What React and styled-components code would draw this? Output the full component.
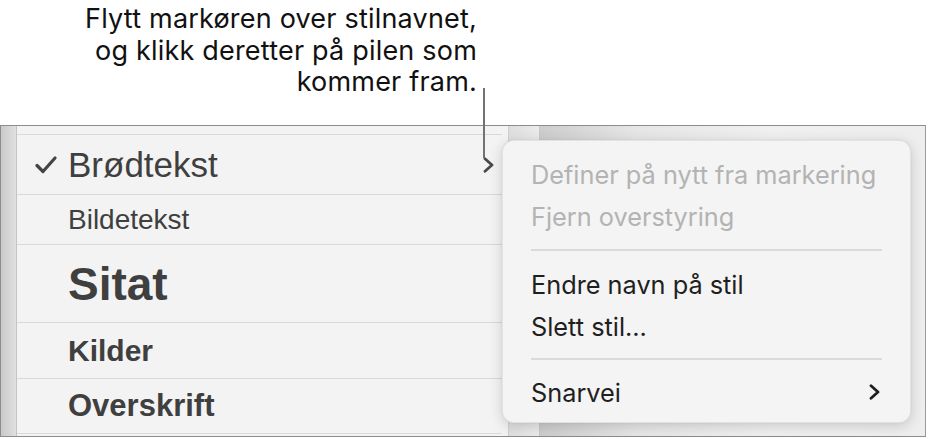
import styled, { createGlobalStyle } from "styled-components";

const GlobalStyle = createGlobalStyle`
  html, body {
    margin: 0;
    padding: 0;
    background: #ffffff;
  }
  body {
    font-family: Inter, "Liberation Sans", sans-serif;
  }
`;

const Page = styled.div`
  position: relative;
  width: 928px;
  height: 439px;
  overflow: hidden;
  background: #ffffff;
`;

const Callout = styled.div`
  height: 125px;
  box-sizing: border-box;
  padding-top: 3px;
  width: 477px;
  text-align: right;
  font-family: Inter, sans-serif;
  font-size: 27px;
  letter-spacing: 0.2px;
  line-height: 31.5px;
  color: #111111;
`;

const CalloutLine = styled.div`
  white-space: nowrap;
`;

// leader line from the callout down to the row's arrow
const Pointer = styled.div`
  position: absolute;
  left: 483px;
  top: 88px;
  width: 2px;
  height: 70px;
  background: #727272;
  z-index: 3;
`;

const Frame = styled.div`
  display: flex;
  height: 312px;
  width: 926px;
  border: 1px solid #8c8c8c;
  border-right-color: #9a9a9a;
  box-sizing: border-box;
  background: #f2f2f2;
`;

const SideStrip = styled.div`
  width: 15px;
  flex: none;
  background: linear-gradient(to right, #c9c9c9, #e0e0e0);
  border-right: 1px solid #c4c4c4;
`;

const List = styled.div`
  width: 491px;
  flex: none;
  display: flex;
  flex-direction: column;
  background: #f3f3f3;
  border-right: 1px solid #cfcfcf;
`;

const Row = styled.div`
  height: ${(p) => p.$h}px;
  flex: none;
  display: flex;
  align-items: center;
  padding-left: ${(p) => (p.$checked ? 17 : 51)}px;
  padding-right: 8px;
  margin-right: 6px;
  border-bottom: 1px solid #d9d9d9;
  font-family: "Liberation Sans", Arial, sans-serif;
  color: #3f3f3f;
  font-size: ${(p) => p.$size}px;
  font-weight: ${(p) => (p.$bold ? 700 : 400)};
`;

const Check = styled.svg`
  width: 24px;
  height: 20px;
  margin-right: 10px;
  flex: none;
`;

const Label = styled.span`
  flex: 1;
`;

const Chevron = styled.svg`
  width: 11px;
  height: 16px;
  flex: none;
`;

const MidStrip = styled.div`
  width: 30px;
  flex: none;
  background: linear-gradient(to right, #dedede, #ebebeb);
  border-right: 1px solid #c8c8c8;
`;

const Canvas = styled.div`
  flex: 1;
  background: linear-gradient(to right, #cdcdcd, #e6e6e6 25%, #f0f0f0 60%, #eeeeee);
`;

const Menu = styled.div`
  position: absolute;
  left: 502px;
  top: 140px;
  width: 409px;
  height: 283px;
  box-sizing: border-box;
  padding: 12px 0 11px;
  border-radius: 12px;
  background: #f4f4f4;
  border: 1px solid rgba(0, 0, 0, 0.07);
  box-shadow: 0 3px 14px rgba(0, 0, 0, 0.16), 0 0 2px rgba(0, 0, 0, 0.08);
  z-index: 2;
`;

const Item = styled.div`
  height: 42px;
  display: flex;
  align-items: center;
  padding: 0 30px 0 28px;
  font-family: Inter, sans-serif;
  font-size: 25.3px;
  color: ${(p) => (p.$disabled ? "#b3b3b3" : "#1f1f1f")};
`;

const ItemText = styled.span`
  flex: 1;
  white-space: nowrap;
`;

const Divider = styled.div`
  height: ${(p) => p.$h}px;
  display: flex;
  align-items: center;
  padding: 0 28px;

  &::after {
    content: "";
    flex: 1;
    height: 2px;
    background: #dadada;
  }
`;

const rows = [
  { label: "Brødtekst", h: 59, size: 35, checked: true },
  { label: "Bildetekst", h: 49, size: 28 },
  { label: "Sitat", h: 77, size: 46, bold: true },
  { label: "Kilder", h: 55, size: 30, bold: true },
  { label: "Overskrift", h: 54, size: 31, bold: true },
];

const ChevronIcon = ({ color }) => (
  <Chevron viewBox="0 0 11 16">
    <path
      d="M2 1.8 L9 8 L2 14.2"
      fill="none"
      stroke={color}
      strokeWidth="2.8"
      strokeLinecap="round"
      strokeLinejoin="round"
    />
  </Chevron>
);

const App = () => {
  return (
    <Page>
      <GlobalStyle />
      <Callout>
        <CalloutLine>Flytt markøren over stilnavnet,</CalloutLine>
        <CalloutLine>og klikk deretter på pilen som</CalloutLine>
        <CalloutLine>kommer fram.</CalloutLine>
      </Callout>
      <Pointer />
      <Frame>
        <SideStrip />
        <List>
          <Row $h={8} $size={10} />
          {rows.map((r) => (
            <Row
              key={r.label}
              $h={r.h}
              $size={r.size}
              $bold={r.bold}
              $checked={r.checked}
            >
              {r.checked && (
                <Check viewBox="0 0 24 20">
                  <path
                    d="M3 10.5 L9 16.5 L21 3"
                    fill="none"
                    stroke="#444444"
                    strokeWidth="3.2"
                    strokeLinecap="round"
                    strokeLinejoin="round"
                  />
                </Check>
              )}
              <Label>{r.label}</Label>
              {r.checked && <ChevronIcon color="#4a4a4a" />}
            </Row>
          ))}
        </List>
        <MidStrip />
        <Canvas />
      </Frame>
      <Menu>
        <Item $disabled>
          <ItemText>Definer på nytt fra markering</ItemText>
        </Item>
        <Item $disabled>
          <ItemText>Fjern overstyring</ItemText>
        </Item>
        <Divider $h={26} />
        <Item>
          <ItemText>Endre navn på stil</ItemText>
        </Item>
        <Item>
          <ItemText>Slett stil...</ItemText>
        </Item>
        <Divider $h={24} />
        <Item>
          <ItemText>Snarvei</ItemText>
          <ChevronIcon color="#1f1f1f" />
        </Item>
      </Menu>
    </Page>
  );
};

export default App;
